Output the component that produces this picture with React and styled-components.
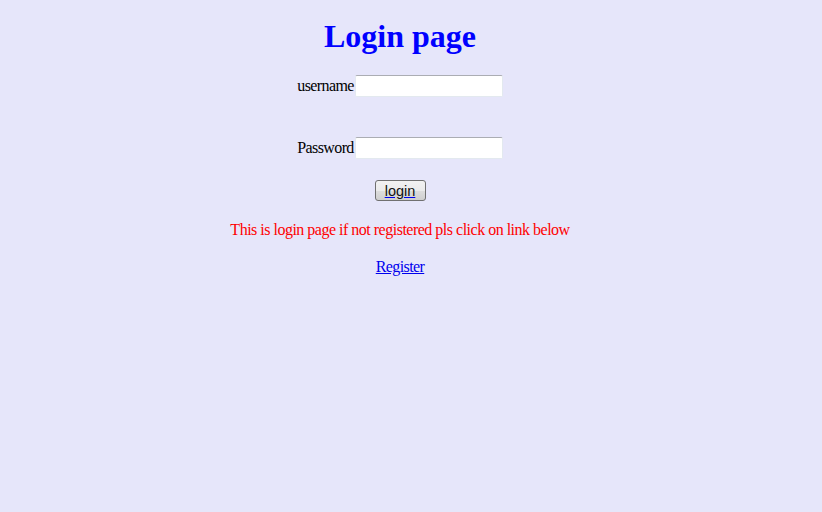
import React from "react";
import styled, { createGlobalStyle } from "styled-components";

const Global = createGlobalStyle`
  html, body { margin: 0; padding: 0; background: #e6e6fa; }
  body { font-family: "Liberation Serif", "Times New Roman", serif; font-size: 16px; color: #000; }
`;

const Page = styled.div`
  width: 800px;
  min-height: 512px;
  padding-top: 18px;
  box-sizing: border-box;
  display: flex;
  flex-direction: column;
  align-items: center;
`;

const Title = styled.h1`
  margin: 0;
  font-size: 32px;
  line-height: 36px;
  font-weight: bold;
  color: #0000ff;
`;

const Field = styled.label`
  display: flex;
  align-items: center;
  height: 22px;
  margin-top: ${(p) => p.$top}px;
  line-height: 18px;
  letter-spacing: -0.6px;
`;

const Input = styled.input`
  box-sizing: border-box;
  width: 148px;
  height: 22px;
  margin: 0 0 0 1px;
  padding: 1px 3px;
  border: 1px solid #e3e9ef;
  border-top-color: #abadb3;
  border-radius: 2px;
  background: #fff;
  font: 13px "Liberation Sans", Arial, sans-serif;
  letter-spacing: 0;
  outline: none;
`;

const Button = styled.button`
  box-sizing: border-box;
  margin-top: 21px;
  width: 51px;
  height: 21px;
  padding: 0;
  border: 1px solid #707070;
  border-radius: 3px;
  background: linear-gradient(#f2f2f2 0%, #ebebeb 50%, #dddddd 51%, #cfcfcf 100%);
  font: 14.5px "Liberation Sans", Arial, sans-serif;
  color: #111;
  line-height: 18px;
  cursor: pointer;
`;

const ButtonText = styled.span`
  text-decoration: underline;
  text-decoration-color: #0000ee;
`;

const Note = styled.p`
  margin: 20px 0 0;
  line-height: 18px;
  letter-spacing: -0.5px;
  color: #ff0000;
`;

const Link = styled.a`
  margin-top: 19px;
  line-height: 18px;
  letter-spacing: -0.6px;
  color: #0000ee;
  text-decoration: underline;
`;

export default function App() {
  return (
    <>
      <Global />
      <Page>
        <Title>Login page</Title>
        <Field $top={21}>
          username<Input type="text" />
        </Field>
        <Field $top={40}>
          Password<Input type="password" />
        </Field>
        <Button type="button">
          <ButtonText>login</ButtonText>
        </Button>
        <Note>This is login page if not registered pls click on link below</Note>
        <Link href="#">Register</Link>
      </Page>
    </>
  );
}
